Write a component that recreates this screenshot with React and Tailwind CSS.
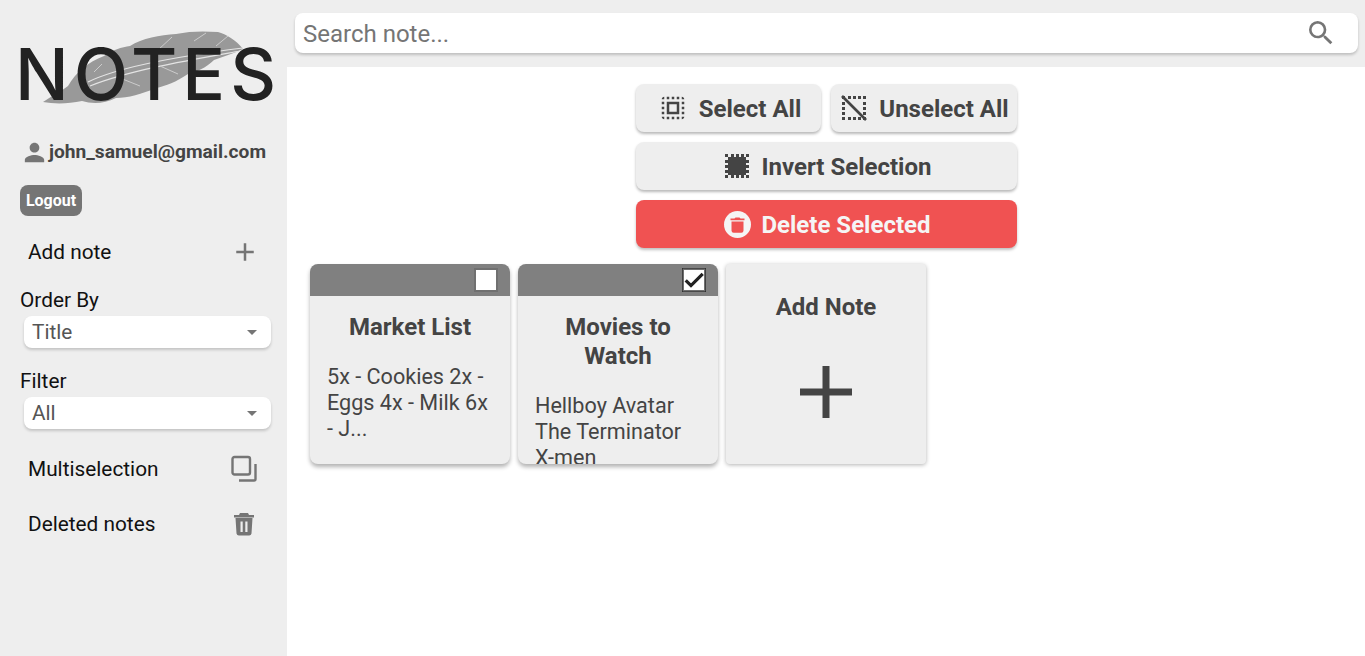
import { MdPerson, MdAdd, MdSelectAll, MdSearch, MdArrowDropDown, MdCheck } from "react-icons/md";

function Feather() {
    return (
        <svg viewBox="0 0 287 132" className="absolute -left-5 top-0 w-[287px] h-[132px]">
            <path
                fill="#999999"
                d="M43 102 C52 96 60 92 68 86 C76 72 88 62 104 56 C112 50 122 47 130 46 C142 38 160 35 176 34 C190 31 204 31 218 32 C226 34 236 40 243 49 C232 54 222 57 214 60 C206 68 196 72 188 74 C176 82 166 86 156 88 C142 94 128 98 116 98 C104 104 92 104 82 101 C68 104 54 104 43 102 Z"
            />
            <path fill="none" stroke="#e4e4e4" strokeWidth="1.2" d="M88 82 C120 66 180 56 243 48" />
            <path fill="none" stroke="#e4e4e4" strokeWidth="1.2" d="M90 86 C130 70 190 60 240 51" />
            <path fill="none" stroke="#cccccc" strokeWidth="1" d="M172 37 L158 50 M206 33 L194 41 M228 36 L216 46 M102 64 L94 72 M120 78 L140 86 M160 66 L178 74" />
        </svg>
    );
}

function SelectBox({ value }) {
    return (
        <div className="mt-1 ml-1 w-[247px] h-8 bg-white rounded-lg shadow-[0_2px_3px_rgba(0,0,0,0.18)] flex items-center justify-between pl-2 pr-[7px] text-[20.8px] text-[#555]">
            <span className="pt-[2px]">{value}</span>
            <MdArrowDropDown size={24} className="text-[#757575]" />
        </div>
    );
}

function MenuRow({ label, className, children }) {
    return (
        <div className={`flex items-center justify-between pl-2 pr-[29px] text-[20.8px] text-[#111] ${className}`}>
            <span className="pt-[2px]">{label}</span>
            {children}
        </div>
    );
}

function ActionButton({ icon, label, className }) {
    return (
        <button
            type="button"
            className={`h-12 pl-[2px] rounded-lg bg-[#eeeeee] text-[#444] text-2xl font-bold flex items-center justify-center shadow-[0_2px_3px_rgba(0,0,0,0.28)] ${className}`}
        >
            {icon}
            <span className="pt-[2px]">{label}</span>
        </button>
    );
}

function NoteCard({ title, checked, children }) {
    return (
        <div className="w-[200px] h-[200px] bg-[#eeeeee] rounded-lg overflow-hidden shadow-[0_3px_4px_rgba(0,0,0,0.3)] text-[#444]">
            <div className="h-8 bg-[#808080] flex justify-end items-center pr-[12px]">
                <div className="w-6 h-6 bg-white border-2 border-[#707070] flex items-center justify-center text-[#222]">
                    {checked && <MdCheck size={24} className="shrink-0 stroke-[1.2]" />}
                </div>
            </div>
            <div className="px-[17px] pt-[17px]">
                <h3 className="text-2xl font-bold leading-[29px] text-center">{title}</h3>
                <p className="mt-[22px] text-[21.6px] leading-[26px] h-[96px]">{children}</p>
            </div>
        </div>
    );
}

const dots = "M1 1 h3 v3 H1 Z M22 1 h3 v3 h-3 Z M1 22 h3 v3 H1 Z M22 22 h3 v3 h-3 Z M7 1 h3 v3 H7 Z M12 1 h3 v3 h-3 Z M17 1 h3 v3 h-3 Z M7 22 h3 v3 H7 Z M12 22 h3 v3 h-3 Z M17 22 h3 v3 h-3 Z M1 7 h3 v3 H1 Z M1 12 h3 v3 H1 Z M1 17 h3 v3 H1 Z M22 7 h3 v3 h-3 Z M22 12 h3 v3 h-3 Z M22 17 h3 v3 h-3 Z";

export default function App() {
    return (
        <div className="flex w-full h-[656px] overflow-hidden bg-white font-['Roboto',sans-serif]">
            <aside className="w-[287px] shrink-0 bg-[#eeeeee] pl-5">
                <div className="relative h-[132px]">
                    <Feather />
                    <div className="absolute -left-[5px] top-[28px] font-['Inter',sans-serif] font-medium text-[71px] leading-[92px] tracking-[5px] text-[#222] whitespace-nowrap">
                        NOTES
                    </div>
                </div>

                <div className="flex items-center h-10 text-[19.2px] font-bold text-[#444]">
                    <MdPerson size={29} className="text-[#757575]" />
                    <span>john_samuel@gmail.com</span>
                </div>

                <button type="button" className="mt-[13px] block w-[62px] h-[31px] rounded-lg bg-[#757575] text-white text-base font-bold">
                    Logout
                </button>

                <MenuRow label="Add note" className="mt-[21px] h-[30px]">
                    <MdAdd size={30} className="text-[#757575] -mr-[2px]" />
                </MenuRow>

                <div className="mt-[21px] text-[20.8px] leading-[24px] text-[#111]">Order By</div>
                <SelectBox value="Title" />

                <div className="mt-[21px] text-[20.8px] leading-[24px] text-[#111]">Filter</div>
                <SelectBox value="All" />

                <MenuRow label="Multiselection" className="mt-[25px] h-[30px]">
                    <svg width="28" height="28" viewBox="0 0 28 28" fill="none" stroke="#757575" strokeWidth="2.4">
                        <rect x="2.5" y="2" width="17.5" height="17.5" rx="2" />
                        <path d="M25.5 9 V24 a1.5 1.5 0 0 1 -1.5 1.5 H9" />
                    </svg>
                </MenuRow>

                <MenuRow label="Deleted notes" className="mt-[25px] h-[30px]">
                    <svg width="22" height="24" viewBox="0 0 22 24" fill="#757575" className="mr-[3px]">
                        <path d="M7 1 h8 l1 2 h5 v2.5 H1 V3 h5 Z" />
                        <path d="M2.5 6 h17 l-1 15.5 a2.5 2.5 0 0 1 -2.5 2 H6 a2.5 2.5 0 0 1 -2.5 -2 Z M7.5 9.5 v10.5 h2.2 V9.5 Z M12.3 9.5 v10.5 h2.2 V9.5 Z" fillRule="evenodd" />
                    </svg>
                </MenuRow>
            </aside>

            <main className="flex-1 min-w-0">
                <div className="h-[67px] bg-[#eeeeee] pt-[13px] pl-2 pr-[7px]">
                    <div className="h-10 bg-white rounded-lg shadow-[0_2px_3px_rgba(0,0,0,0.2)] flex items-center justify-between pl-2 pr-[21px] text-2xl text-[#757575]">
                        <span className="pt-[2px]">Search note...</span>
                        <MdSearch size={32} className="text-[#757575]" />
                    </div>
                </div>

                <div className="mt-[17px] ml-[349px] w-[381px] flex flex-col gap-[10px]">
                    <div className="flex gap-[10px]">
                        <ActionButton className="w-[185px] gap-[11px]" label="Select All" icon={<MdSelectAll size={30} />} />
                        <ActionButton
                            className="w-[186px] gap-[12px]"
                            label="Unselect All"
                            icon={
                                <svg width="26" height="26" viewBox="0 0 26 26" fill="#444">
                                    <path d={dots} />
                                    <path d="M1 1 L25 25" stroke="#444" strokeWidth="2.6" fill="none" />
                                </svg>
                            }
                        />
                    </div>
                    <ActionButton
                        className="gap-3"
                        label="Invert Selection"
                        icon={
                            <svg width="26" height="26" viewBox="0 0 26 26" fill="#444">
                                <rect x="4" y="4" width="18" height="18" />
                                <path d={dots} />
                            </svg>
                        }
                    />
                    <button
                        type="button"
                        className="h-12 pl-[2px] rounded-lg bg-[#f05252] text-[#f5f5f5] text-2xl font-bold flex items-center justify-center gap-[10px] shadow-[0_2px_3px_rgba(0,0,0,0.25)]"
                    >
                        <svg width="27" height="27" viewBox="0 0 27 27">
                            <circle cx="13.5" cy="13.5" r="13.5" fill="#f5f5f5" />
                            <path fill="#f05252" d="M6.5 7.5 h4 l1 -1 h4 l1 1 h4 v1.8 h-14 Z M7.5 10.5 h12 v9 a2.2 2.2 0 0 1 -2.2 2.2 h-7.6 a2.2 2.2 0 0 1 -2.2 -2.2 Z" />
                        </svg>
                        <span className="pt-[2px]">Delete Selected</span>
                    </button>
                </div>

                <div className="mt-4 pl-[23px] flex gap-2">
                    <NoteCard title="Market List">5x - Cookies 2x - Eggs 4x - Milk 6x - J...</NoteCard>
                    <NoteCard title="Movies to Watch" checked>
                        Hellboy Avatar The Terminator X-men
                    </NoteCard>
                    <div className="w-[200px] h-[200px] bg-[#eeeeee] rounded-sm shadow-[0_1px_4px_rgba(0,0,0,0.3)] text-[#444] flex flex-col items-center pt-[29px]">
                        <h3 className="text-2xl font-bold leading-[29px]">Add Note</h3>
                        <svg width="54" height="54" viewBox="0 0 54 54" fill="#444" className="mt-[43px]">
                            <path d="M23.5 1 h7 v22.5 h22.5 v7 H30.5 v22.5 h-7 V30.5 H1 v-7 h22.5 Z" />
                        </svg>
                    </div>
                </div>
            </main>
        </div>
    );
}
